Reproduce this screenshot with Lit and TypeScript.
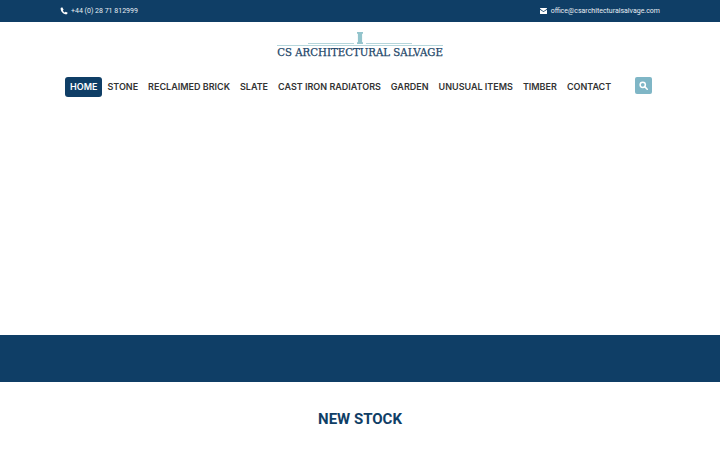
import { LitElement, html, css } from "lit";
import { customElement } from "lit/decorators.js";

const NAV = ["STONE", "RECLAIMED BRICK", "SLATE", "CAST IRON RADIATORS", "GARDEN", "UNUSUAL ITEMS", "TIMBER", "CONTACT"];

@customElement("app-root")
export class AppRoot extends LitElement {
  static styles = css`
    :host { display: block; background: #fff; font-family: Roboto, sans-serif; height: 450px; overflow: hidden; }
    .top { height: 22px; background: #0f3e66; color: #fff; display: flex; justify-content: space-between; align-items: center; padding: 0 60px; font-size: 7px; }
    .top span { display: flex; align-items: center; gap: 3px; color: #e8eef3; }
    .top span.mail { gap: 4px; }
    .top svg { display: block; fill: #fff; }
    .logo { height: 55px; display: flex; flex-direction: column; align-items: center; }
    .mark { display: flex; align-items: flex-end; gap: 3px; margin-top: 10px; height: 12px; }
    .mark i { display: block; width: 46px; height: 1px; background: #b5d6db; }
    .col { display: block; width: 6px; height: 12px; background: #93c4cc; clip-path: polygon(0 0,100% 0,100% 15%,85% 15%,85% 85%,100% 85%,100% 100%,0 100%,0 85%,15% 85%,15% 15%,0 15%); }
    .rule { width: 166px; height: 1px; background: #b5d6db; margin-top: 1px; }
    .name { font-family: "DejaVu Serif", serif; font-size: 10.2px; color: #1d4668; line-height: 13px; white-space: nowrap; -webkit-text-stroke: 0.25px #1d4668; }
    nav { display: flex; align-items: flex-start; padding-left: 65px; height: 258px; }
    .item { font-family: Inter, sans-serif; font-weight: 600; font-size: 9px; color: #333; height: 20px; line-height: 20px; padding: 0 5px; white-space: nowrap; }
    .item.on { background: #0f3e66; color: #fff; border-radius: 3px; }
    .search { width: 17px; height: 17px; border-radius: 2px; background: #7fb6c6; display: flex; align-items: center; justify-content: center; margin-left: 19px; }
    .band { height: 47px; background: #0f3e66; }
    h2 { margin: 28px 0 0; text-align: center; font: 700 15px/19px Roboto, sans-serif; color: #0f3e66; }
  `;

  render() {
    return html`
      <div class="top">
        <span><svg width="8" height="8" viewBox="0 0 24 24"><path d="M6.600 1 2 3C1 13 10 23 21 22l2-5-6-3-2.500 2.500c-2.500-1-5-3.500-6-6L11 8z"/></svg>+44 (0) 28 71 812999</span>
        <span class="mail"><svg width="7" height="6" viewBox="0 0 14 12"><path d="M1 0h12a1 1 0 0 1 1 1v.7L7 6.500 0 1.700V1a1 1 0 0 1 1-1z"/><path d="M0 3.300 7 8l7-4.700V11a1 1 0 0 1-1 1H1a1 1 0 0 1-1-1z"/></svg>office@csarchitecturalsalvage.com</span>
      </div>
      <div class="logo">
        <div class="mark"><i></i><b class="col"></b><i></i></div>
        <div class="rule"></div>
        <div class="name">CS ARCHITECTURAL SALVAGE</div>
      </div>
      <nav>
        <div class="item on">HOME</div>
        ${NAV.map((n) => html`<div class="item">${n}</div>`)}
        <div class="search"><svg width="9" height="9" viewBox="0 0 24 24" fill="none" stroke="#fff" stroke-width="4"><circle cx="10" cy="10" r="7"/><path d="m15 15 7 7" stroke-linecap="round"/></svg></div>
      </nav>
      <div class="band"></div>
      <h2>NEW STOCK</h2>
    `;
  }
}
